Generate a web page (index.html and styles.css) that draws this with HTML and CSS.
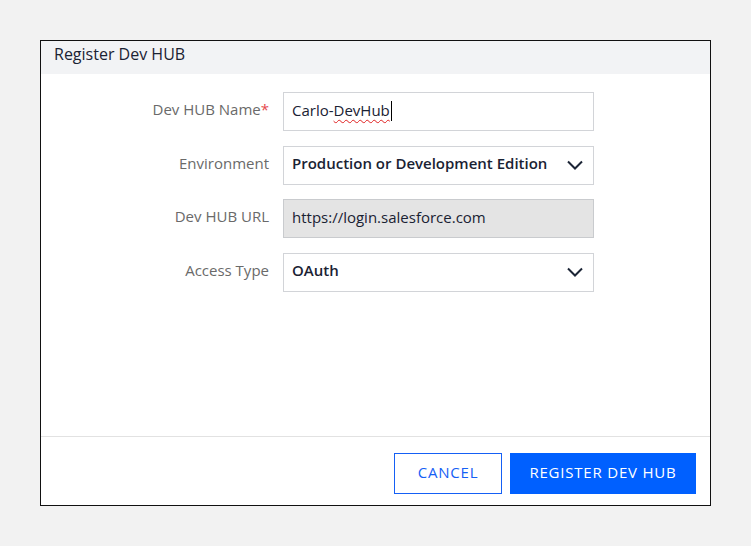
FILE: index.html
```html
<!DOCTYPE html>
<html>
<head>
<meta charset="utf-8">
<link rel="stylesheet" href="styles.css">
</head>
<body>
<div class="dialog">
  <div class="header">Register Dev HUB</div>
  <div class="body">
    <div class="row">
      <div class="label">Dev HUB Name<span class="req">*</span></div>
      <div class="field"><span class="txt">Carlo-<span class="spell">DevHub</span></span><span class="caret"></span></div>
    </div>
    <div class="row">
      <div class="label">Environment</div>
      <div class="field select"><span class="val">Production or Development Edition</span>
        <svg class="chev" width="16" height="10" viewBox="0 0 16 10"><path d="M1 1.5 L8 8.5 L15 1.5" fill="none" stroke="#1c2536" stroke-width="2"/></svg>
      </div>
    </div>
    <div class="row">
      <div class="label">Dev HUB URL</div>
      <div class="field disabled"><span class="txt">https://login.salesforce.com</span></div>
    </div>
    <div class="row">
      <div class="label">Access Type</div>
      <div class="field select"><span class="val">OAuth</span>
        <svg class="chev" width="16" height="10" viewBox="0 0 16 10"><path d="M1 1.5 L8 8.5 L15 1.5" fill="none" stroke="#1c2536" stroke-width="2"/></svg>
      </div>
    </div>
  </div>
  <div class="footer">
    <button class="btn cancel">CANCEL</button>
    <button class="btn primary">REGISTER DEV HUB</button>
  </div>
</div>
</body>
</html>
```
FILE: styles.css
```css
html, body {
  margin: 0;
  padding: 0;
  background: #f2f2f2;
}
body {
  padding: 40px;
  font-family: "Open Sans", "Noto Sans", sans-serif;
}
.dialog {
  box-sizing: border-box;
  width: 671px;
  height: 466px;
  border: 1px solid #111;
  background: #fff;
  display: flex;
  flex-direction: column;
}
.header {
  height: 33px;
  background: #f2f3f5;
  box-sizing: border-box;
  padding: 2px 13px 0;
  font-size: 16px;
  color: #1a2233;
}
.body {
  flex: 1;
  padding-top: 18px;
  display: flex;
  flex-direction: column;
  gap: 14.6px;
}
.row {
  display: flex;
  align-items: center;
  gap: 14px;
}
.label {
  width: 228px;
  text-align: right;
  font-size: 15px;
  color: #6a6a6a;
  margin-bottom: 5px;
}
.req {
  color: #e5484d;
}
.field {
  box-sizing: border-box;
  width: 311px;
  height: 39px;
  border: 1px solid #d2d4d8;
  background: #fff;
  padding: 0 8px;
  display: flex;
  align-items: center;
  font-size: 15px;
  color: #1a2233;
}
.txt, .val {
  margin-bottom: 4px;
}
.field.disabled {
  background: #e4e4e4;
  border-color: #c9cbce;
}
.select {
  justify-content: space-between;
  padding-right: 10px;
}
.select .val {
  font-weight: 600;
}
.spell {
  text-decoration: underline wavy #e02020;
  text-decoration-thickness: 1px;
  text-underline-offset: 3px;
}
.caret {
  display: inline-block;
  width: 1px;
  height: 20px;
  background: #000;
  margin-left: 1px;
  margin-bottom: 2px;
}
.footer {
  border-top: 1px solid #e2e2e2;
  padding: 16px 14px 11px;
  display: flex;
  justify-content: flex-end;
  gap: 8px;
}
.btn {
  font-family: "Open Sans", "Noto Sans", sans-serif;
  font-size: 15px;
  height: 41px;
  box-sizing: border-box;
  letter-spacing: 0.8px;
  cursor: pointer;
  padding: 0 0 4px;
}
.cancel {
  width: 108px;
  background: #fff;
  color: #1560f5;
  border: 1px solid #1560f5;
}
.primary {
  width: 186px;
  background: #0060ff;
  color: #fff;
  border: none;
  font-weight: 500;
}
```
